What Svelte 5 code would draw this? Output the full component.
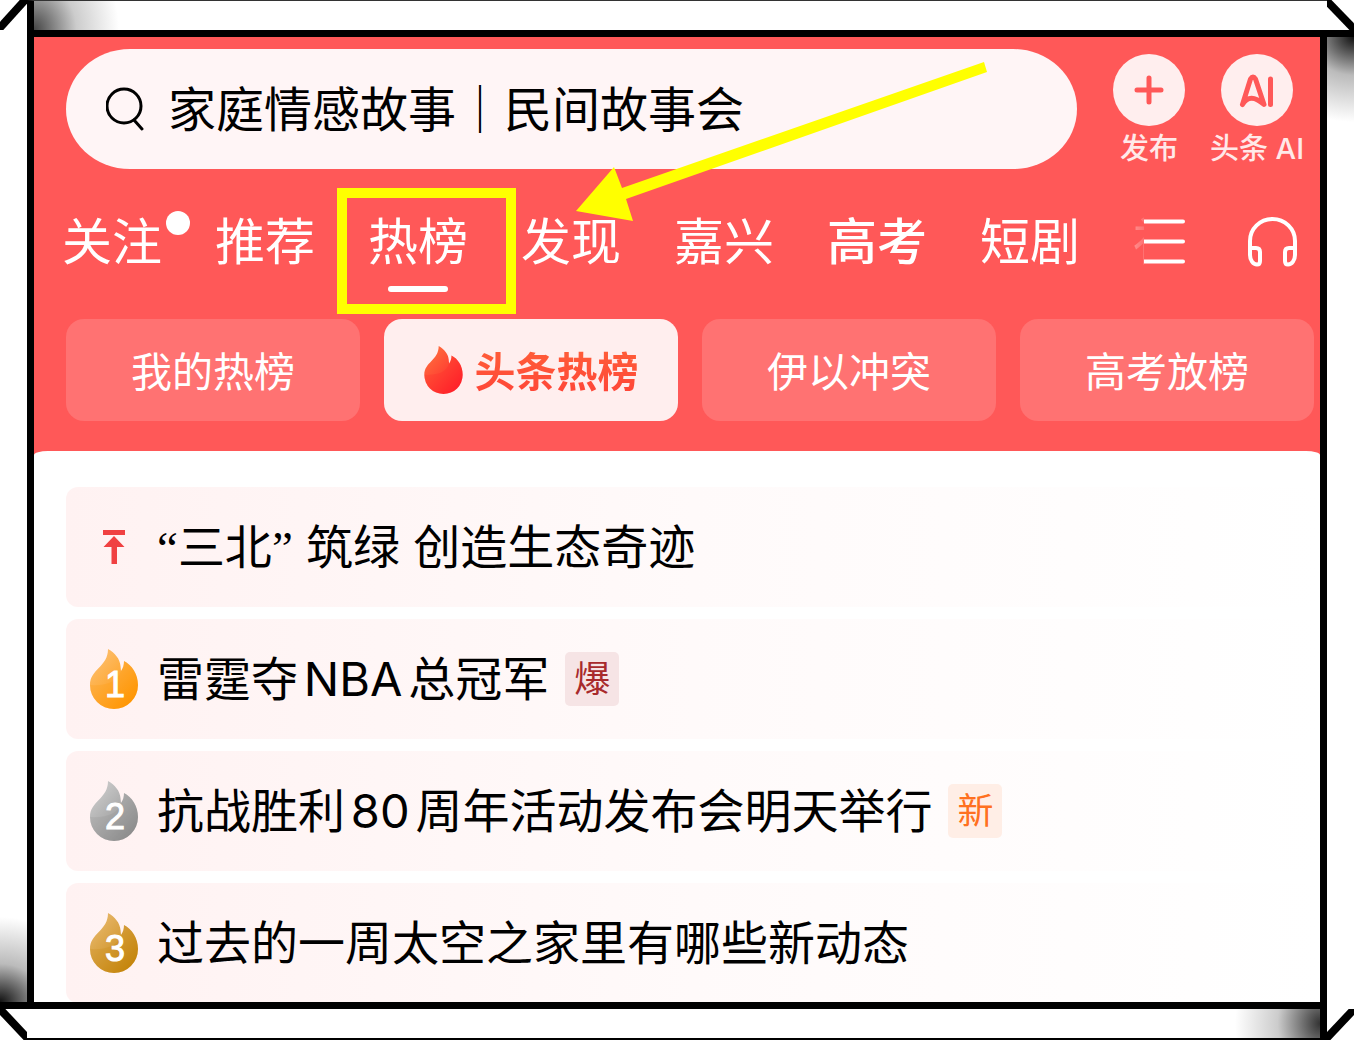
<script>
  let query = '家庭情感故事｜民间故事会';
  let currentTab = '热榜';
  let currentBoard = '头条热榜';

  const tabs = [
    { name: '关注', dot: true },
    { name: '推荐' },
    { name: '热榜' },
    { name: '发现' },
    { name: '嘉兴' },
    { name: '高考', strong: true },
    { name: '短剧' },
    { name: '社会' }
  ];

  const boards = ['我的热榜', '头条热榜', '伊以冲突', '高考放榜'];

  const news = [
    { quoted: '三北', title: ' 筑绿 创造生态奇迹' },
    { rank: 1, title: '雷霆夺NBA总冠军', tag: '爆', kind: 'boom', from: '#fdbd6a', to: '#ff9500' },
    { rank: 2, title: '抗战胜利80周年活动发布会明天举行', tag: '新', kind: 'new', from: '#c9c9c9', to: '#8b8b8b' },
    { rank: 3, title: '过去的一周太空之家里有哪些新动态', from: '#e6b567', to: '#c48408' }
  ];
</script>

{#snippet flame(id, from, to, rank)}
  <svg viewBox="0 0 48 60" aria-hidden="true">
    <defs>
      <linearGradient id={id} x1="0.1" y1="0.2" x2="0.8" y2="1">
        <stop offset="0" stop-color={from} />
        <stop offset="1" stop-color={to} />
      </linearGradient>
    </defs>
    <path
      fill="url(#{id})"
      d="M18 0C25 4 30 10 30.500 17L31 22C33 19 34 16 34 12C42 16 48 25 48 36A24 24 0 0 1 0 36C0 20 18 18 18 0Z"
    />
    <path fill={to} opacity="0.2" d="M0 36C18 37 28 32 31 22C33 19 34 16 34 12C42 16 48 25 48 36A24 24 0 0 1 0 36Z" />
    {#if rank}
      <text x="25" y="48" text-anchor="middle">{rank}</text>
    {/if}
  </svg>
{/snippet}

<div class="frame">
  <svg class="corner" viewBox="0 0 27 30"><path d="M-3 31L26 -1" /></svg>
  <div class="rail top"></div>
  <svg class="corner" viewBox="0 0 27 30"><path d="M-4 -3L28 30" /></svg>

  <div class="rail left"></div>
  <main>
    <header>
      <div class="search-row">
        <label class="search">
          <svg viewBox="0 0 40 44" aria-hidden="true">
            <circle cx="18" cy="19" r="17" />
            <path d="M28 33L36 42" />
          </svg>
          <input type="text" aria-label="搜索" bind:value={query} />
        </label>
        <button class="action">
          <svg viewBox="0 0 72 72" aria-hidden="true">
            <path d="M36 24V48M24 36H48" />
          </svg>
          <span>发布</span>
        </button>
        <button class="action">
          <svg viewBox="0 0 72 72" aria-hidden="true">
            <path d="M21.500 50.500L29.500 25Q32 21 34.500 25L43 50.500Q29 38 21.500 50.500M49.500 25V50.500" />
          </svg>
          <span>头条 AI</span>
        </button>
      </div>

      <div class="tab-row">
        <nav>
          {#each tabs as tab}
            <a
              href="#tab"
              class:strong={tab.strong}
              class:current={tab.name === currentTab}
              on:click|preventDefault={() => (currentTab = tab.name)}
            >
              {tab.name}
              {#if tab.dot}<i class="dot"></i>{/if}
              {#if tab.name === '热榜'}<i class="marker"></i>{/if}
            </a>
          {/each}
        </nav>
        <button class="menu" aria-label="全部频道">
          <svg viewBox="0 0 42 46"><path d="M0 2.500H39M0 22.500H39M0 42.500H39" /></svg>
        </button>
        <button class="listen" aria-label="听头条">
          <svg viewBox="0 0 49 50">
            <path d="M2 31V24A22.500 22 0 0 1 47 24V31" />
            <path d="M2 30V38C2 43 5 47.500 9 47.500Q12 47.500 12 44V35Q12 31 8 31H2" />
            <path d="M47 30V38C47 43 44 47.500 40 47.500Q37 47.500 37 44V35Q37 31 41 31H47" />
          </svg>
        </button>
      </div>

      <div class="boards">
        {#each boards as board}
          <button class:active={board === currentBoard} on:click={() => (currentBoard = board)}>
            {#if board === '头条热榜'}
              {@render flame('flame-hot', '#ff6a3c', '#ff1f2a')}
            {/if}
            <span>{board}</span>
          </button>
        {/each}
      </div>

      <svg class="arrow" viewBox="0 0 412 160" aria-hidden="true">
        <path d="M0 149L38 105L46 126L408 0L411 10L50 137L57 159Z" />
      </svg>
    </header>

    <section>
      <ol>
        {#each news as item}
          <li>
            {#if item.rank}
              <span class="icon">{@render flame('flame-' + item.rank, item.from, item.to, item.rank)}</span>
            {:else}
              <span class="icon pin">
                <svg viewBox="0 0 22 34" aria-hidden="true">
                  <path d="M0 0H22V5H0ZM11 6L21.500 17H14V34H8.500V17H0.500Z" />
                </svg>
              </span>
            {/if}
            <a href="#news">
              {#if item.quoted}<span class="quote">“</span>{item.quoted}<span class="quote">”</span>{/if}{item.title}
            </a>
            {#if item.tag}<span class="tag {item.kind}">{item.tag}</span>{/if}
          </li>
        {/each}
      </ol>
    </section>
  </main>
  <div class="rail right"></div>

  <svg class="corner" viewBox="0 0 27 31"><path d="M-2 -2L31 33" /></svg>
  <div class="rail bottom"></div>
  <svg class="corner" viewBox="0 0 27 31"><path d="M-3 32L30 -3" /></svg>
</div>

<style>
  :global(body) {
    background: #fff;
    font-family: Inter, "Noto Sans CJK SC", sans-serif;
  }

  .frame {
    display: grid;
    grid-template-columns: 27px minmax(0, 1fr) 27px;
    grid-template-rows: 30px 1fr 31px;
    min-height: 100vh;
  }

  .corner {
    width: 100%;
    height: 100%;
    fill: none;
    stroke: #000;
    stroke-width: 8;
  }

  .top {
    border-top: 1px solid #333;
    border-left: 7px solid #000;
    background: radial-gradient(85px 100px at 0 100%, #444, #ccc 50%, #fff);
  }

  .left {
    border-bottom: 7px solid #000;
    background: radial-gradient(100px 85px at 0 100%, #111, #bbb 45%, #fff);
  }

  .right {
    border-top: 7px solid #000;
    background: radial-gradient(100px 85px at 100% 0, #111, #bbb 45%, #fff);
  }

  .bottom {
    border-right: 7px solid #000;
    border-bottom: 2px solid #000;
    background: radial-gradient(85px 100px at 100% 50%, #333, #ccc 50%, #fff);
  }

  main {
    border: 7px solid #000;
    overflow: hidden;
    background: #ff5858;
  }

  button {
    border: 0;
    padding: 0;
    background: none;
    font-family: inherit;
    cursor: pointer;
  }

  a {
    color: inherit;
    text-decoration: none;
  }

  svg {
    display: block;
  }

  header {
    position: relative;
    padding: 12px 0 30px;
    color: #fff;
  }

  .search-row {
    display: flex;
    align-items: center;
    padding: 0 9px 0 32px;
  }

  .search {
    flex: 1;
    display: flex;
    align-items: center;
    gap: 22px;
    min-width: 0;
    height: 120px;
    margin-right: 18px;
    padding: 0 40px;
    box-sizing: border-box;
    border-radius: 64px / 60px;
    background: #fff5f6;
  }

  .search svg {
    flex: none;
    width: 40px;
    height: 44px;
    fill: none;
    stroke: #000;
    stroke-width: 3;
    stroke-linecap: round;
  }

  .search input {
    flex: 1;
    min-width: 0;
    height: 72px;
    padding: 0 0 6px;
    border: 0;
    outline: 0;
    background: none;
    color: #000;
    font-family: inherit;
    font-size: 48px;
  }

  .action {
    width: 108px;
    padding-top: 4px;
    color: #ffe9e9;
    font-size: 29px;
    font-weight: 500;
    line-height: 40px;
    white-space: nowrap;
  }

  .action svg {
    width: 72px;
    height: 72px;
    margin: 0 auto 3px;
    border-radius: 50%;
    background: #ffeeee;
    fill: none;
    stroke: #ff5858;
    stroke-width: 5;
    stroke-linecap: round;
    stroke-linejoin: round;
  }

  .tab-row {
    display: flex;
    align-items: center;
    margin-bottom: 4px;
    padding: 0 23px 0 28px;
  }

  nav {
    flex: 1;
    display: flex;
    gap: 53px;
    min-width: 0;
    overflow: hidden;
    -webkit-mask-image: linear-gradient(to right, #000 calc(100% - 50px), rgba(0, 0, 0, 0.15));
    mask-image: linear-gradient(to right, #000 calc(100% - 50px), rgba(0, 0, 0, 0.15));
  }

  nav a {
    position: relative;
    flex: none;
    font-size: 50px;
    line-height: 146px;
    white-space: nowrap;
  }

  nav a.strong {
    font-weight: 500;
  }

  nav a.current::after {
    content: "";
    position: absolute;
    left: 20px;
    bottom: 23px;
    width: 60px;
    height: 6px;
    border-radius: 3px;
    background: #fff;
  }

  .dot {
    position: absolute;
    top: 42px;
    right: -28px;
    width: 24px;
    height: 24px;
    border-radius: 50%;
    background: #fff;
  }

  .marker {
    position: absolute;
    top: 19px;
    left: -31px;
    width: 159px;
    height: 106px;
    border: 10px solid #ff0;
  }

  .tab-row svg {
    fill: none;
    stroke: #fff;
    stroke-width: 4;
    stroke-linecap: round;
  }

  .menu {
    width: 42px;
    margin-right: 62px;
  }

  .listen {
    width: 49px;
  }

  .boards {
    display: flex;
    gap: 24px;
    padding: 0 6px 0 32px;
  }

  .boards button {
    flex: 1;
    display: flex;
    align-items: center;
    justify-content: center;
    gap: 12px;
    height: 102px;
    border-radius: 18px;
    background: #ff7272;
    color: #fff;
    font-size: 41px;
    white-space: nowrap;
  }

  .boards span {
    padding-bottom: 2px;
  }

  .boards svg {
    width: 39px;
    height: 48px;
  }

  .boards .active {
    background: #ffeeee;
    font-weight: 700;
  }

  .boards .active span {
    background: linear-gradient(#ff6238, #ff4238);
    -webkit-background-clip: text;
    background-clip: text;
    color: transparent;
  }

  .arrow {
    position: absolute;
    top: 25px;
    left: 542px;
    width: 412px;
    height: 160px;
    fill: #ff0;
  }

  section {
    padding: 36px 0 0 32px;
    border-radius: 14px 14px 0 0 / 4px 4px 0 0;
    background: #fff;
  }

  ol {
    display: flex;
    flex-direction: column;
    gap: 12px;
    margin: 0 0 -1px;
    padding: 0;
    list-style: none;
  }

  li {
    display: flex;
    align-items: center;
    height: 120px;
    padding-left: 24px;
    border-radius: 12px;
    background: linear-gradient(to right, #fff2f2, #fffafa 50%, #fff);
    color: #000;
    font-size: 47px;
    white-space: nowrap;
  }

  li a {
    line-height: 60px;
    text-autospace: normal;
  }

  .quote {
    font-family: "Liberation Serif", serif;
  }

  .icon {
    width: 48px;
    margin-right: 19px;
  }

  .icon text {
    fill: #fff;
    stroke: #fff;
    stroke-width: 1;
    font-family: "Liberation Sans", sans-serif;
    font-size: 36px;
  }

  .pin svg {
    width: 22px;
    height: 34px;
    margin: 0 auto;
    fill: #f04142;
  }

  .tag {
    width: 54px;
    margin-left: 16px;
    border-radius: 5px;
    font-size: 36px;
    line-height: 54px;
    text-align: center;
  }

  .boom {
    background: #f6e4e5;
    color: #a82a2c;
  }

  .new {
    background: #ffeee6;
    color: #ff7020;
  }
</style>
